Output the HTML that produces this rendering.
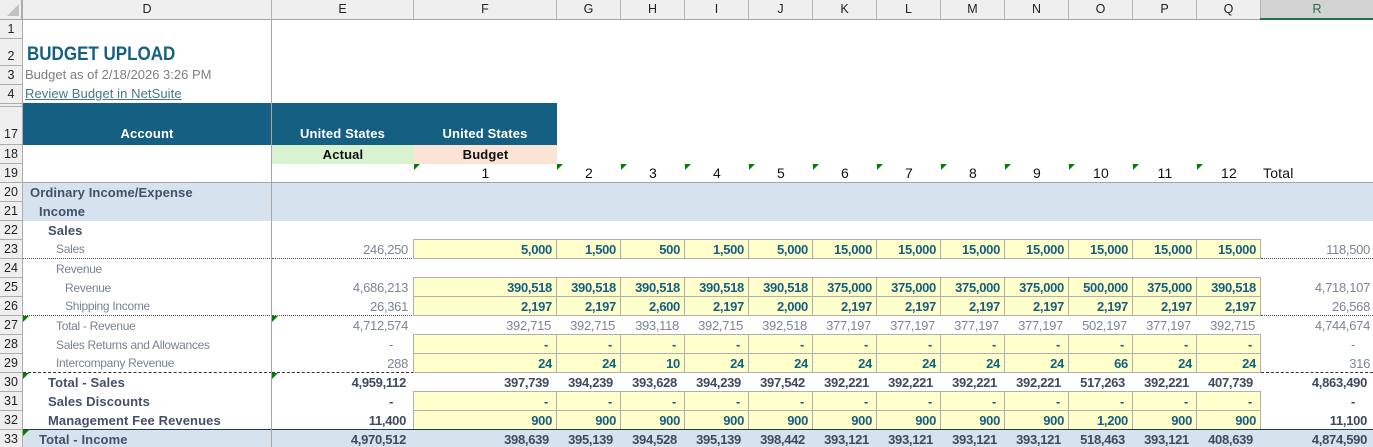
<!DOCTYPE html>
<html><head><meta charset="utf-8"><style>
html,body{margin:0;padding:0;background:#fff;width:1373px;height:447px;overflow:hidden}
body{position:relative;font-family:"Liberation Sans",sans-serif;font-size:13px}
.a{position:absolute;white-space:nowrap}
.ch{position:absolute;top:0;height:19px;background:#efefef;border-right:1px solid #b4b4b4;box-sizing:border-box;text-align:center;font:12.5px/19px "Liberation Sans",sans-serif;color:#222}
.rh{position:absolute;left:0;width:22px;background:#efefef;border-bottom:1px solid #adadad;box-sizing:border-box;text-align:center;font:12.5px/18px "Liberation Sans",sans-serif;color:#222;display:flex;align-items:flex-end;justify-content:center}
table{position:absolute;left:0;top:145px;border-collapse:separate;border-spacing:0;table-layout:fixed;width:1373px}
tr{height:19px}
td{height:19px;padding:0;box-sizing:border-box;white-space:nowrap;overflow:visible;text-align:right;vertical-align:middle;line-height:17px;font-size:13px;letter-spacing:-.3px}
td.h{background:#efefef;border-bottom:1px solid #adadad;border-right:1px solid #adadad;text-align:center;font:12.5px/18px "Liberation Sans",sans-serif;color:#222;letter-spacing:0}
td.l{text-align:left;color:#7a8394;font-size:12px;letter-spacing:-.3px;padding-top:0;line-height:18px}
tr.dot td.l,tr.dash td.l{padding-top:1px;line-height:17px}
td.m{text-align:left;color:#44506a;font-weight:bold;letter-spacing:.1px}
td.g{color:#7d8594;padding-right:6px}
td.b{color:#3f4a5f;font-weight:bold;padding-right:8px}
td.y{color:#156082;font-weight:bold;padding-right:5px;background:#ffffcc;position:relative}
td.y:after{content:"";position:absolute;left:-1px;top:-1px;right:0;bottom:0;border:1px solid #b0b0b0}
td.z{color:#156082;font-weight:bold;padding-right:9px;background:#ffffcc;position:relative}
td.z:after{content:"";position:absolute;left:-1px;top:-1px;right:0;bottom:0;border:1px solid #b0b0b0}
td.c{text-align:center;font:14px/17px "Liberation Sans",sans-serif;color:#111;letter-spacing:.2px;vertical-align:bottom}
td.hd{text-align:center;font-weight:bold;color:#111;letter-spacing:.15px}
tr.blue td:not(.h){background:#d6e3ee}
tr.dot td.u{border-bottom:1px dotted #555}
tr.dash td.u{border-bottom:1px dashed #333}
.i1{padding-left:7px}.i2{padding-left:16px}.i3{padding-left:25px}.i4{padding-left:33px}.i5{padding-left:42px}
.t{position:absolute;width:0;height:0;border-top:6px solid #008000;border-right:6px solid transparent;z-index:5}
.w{color:#fff;font-weight:bold;text-align:center;letter-spacing:.15px;font-size:13px}
</style></head><body>
<div class="ch" style="left:0;width:23px;border-right:2px solid #adadad"></div>
<svg class="a" style="left:0;top:0" width="22" height="19"><polygon points="19,4 19,16 7,16" fill="#c2c2c2"/></svg>
<div class="ch" style="left:23px;width:249px">D</div>
<div class="ch" style="left:272px;width:142px">E</div>
<div class="ch" style="left:414px;width:143px">F</div>
<div class="ch" style="left:557px;width:64px">G</div>
<div class="ch" style="left:621px;width:64px">H</div>
<div class="ch" style="left:685px;width:64px">I</div>
<div class="ch" style="left:749px;width:64px">J</div>
<div class="ch" style="left:813px;width:64px">K</div>
<div class="ch" style="left:877px;width:64px">L</div>
<div class="ch" style="left:941px;width:64px">M</div>
<div class="ch" style="left:1005px;width:64px">N</div>
<div class="ch" style="left:1069px;width:64px">O</div>
<div class="ch" style="left:1133px;width:64px">P</div>
<div class="ch" style="left:1197px;width:64px">Q</div>
<div class="ch" style="left:1261px;width:112px;background:#d2d2d2;color:#2b6b4a;border:0">R</div>
<div class="a" style="left:0;top:19px;width:1261px;height:1px;background:#a6a6a6"></div>
<div class="a" style="left:1260px;top:18px;width:113px;height:2px;background:#217346"></div>

<div class="rh" style="top:20px;height:19px">1</div>
<div class="rh" style="top:39px;height:27px">2</div>
<div class="rh" style="top:66px;height:19px">3</div>
<div class="rh" style="top:85px;height:19px">4</div>
<div class="rh" style="top:104px;height:3px"></div>
<div class="rh" style="top:107px;height:38px;padding-bottom:1px">17</div>
<div class="a" style="left:22px;top:20px;width:1px;height:427px;background:#adadad"></div>

<div class="a" style="left:27px;top:44px;font:bold 19px/22px 'Liberation Sans',sans-serif;color:#156082;transform:scaleX(.895);transform-origin:left center">BUDGET UPLOAD</div>
<div class="a" style="left:25px;top:66px;font-size:13px;line-height:18px;color:#7f7f7f">Budget as of 2/18/2026 3:26 PM</div>
<div class="a" style="left:25px;top:85px;font-size:13px;line-height:18px;color:#467886;letter-spacing:.08px;text-decoration:underline">Review Budget in NetSuite</div>

<div class="a" style="left:23px;top:103px;width:534px;height:42px;background:#156082"></div>
<div class="a w" style="left:23px;top:125px;width:248px;line-height:18px">Account</div>
<div class="a w" style="left:272px;top:125px;width:141px;line-height:18px">United States</div>
<div class="a w" style="left:414px;top:125px;width:142px;line-height:18px">United States</div>

<table>
<colgroup><col style="width:23px"><col style="width:249px"><col style="width:142px"><col style="width:143px"><col span="11" style="width:64px"><col style="width:112px"></colgroup>
<tr><td class="h">18</td><td></td><td class="hd" style="background:#d9f2d0">Actual</td><td class="hd" style="background:#fbe3d6">Budget</td><td colspan="12"></td></tr>
<tr><td class="h">19</td><td style="border-bottom:1px solid #a6a6a6"></td><td style="border-bottom:1px solid #a6a6a6"></td><td class="c" style="border-bottom:1px solid #a6a6a6">1</td><td class="c" style="border-bottom:1px solid #a6a6a6">2</td><td class="c" style="border-bottom:1px solid #a6a6a6">3</td><td class="c" style="border-bottom:1px solid #a6a6a6">4</td><td class="c" style="border-bottom:1px solid #a6a6a6">5</td><td class="c" style="border-bottom:1px solid #a6a6a6">6</td><td class="c" style="border-bottom:1px solid #a6a6a6">7</td><td class="c" style="border-bottom:1px solid #a6a6a6">8</td><td class="c" style="border-bottom:1px solid #a6a6a6">9</td><td class="c" style="border-bottom:1px solid #a6a6a6">10</td><td class="c" style="border-bottom:1px solid #a6a6a6">11</td><td class="c" style="border-bottom:1px solid #a6a6a6">12</td><td class="c" style="border-bottom:1px solid #a6a6a6;text-align:left;padding-left:2px">Total</td></tr>
<tr class="blue"><td class="h">20</td><td class="m i1">Ordinary Income/Expense</td><td colspan="14"></td></tr>
<tr class="blue"><td class="h">21</td><td class="m i2">Income</td><td colspan="14"></td></tr>
<tr><td class="h">22</td><td class="m i3">Sales</td><td colspan="14"></td></tr>
<tr class="dot"><td class="h">23</td><td class="l i4 u">Sales</td><td class="g u">246,250</td><td class="y">5,000</td><td class="y">1,500</td><td class="y">500</td><td class="y">1,500</td><td class="y">5,000</td><td class="y">15,000</td><td class="y">15,000</td><td class="y">15,000</td><td class="y">15,000</td><td class="y">15,000</td><td class="y">15,000</td><td class="y">15,000</td><td class="g u" style="padding-right:3px">118,500</td></tr>
<tr><td class="h">24</td><td class="l i4">Revenue</td><td colspan="14"></td></tr>
<tr><td class="h">25</td><td class="l i5">Revenue</td><td class="g">4,686,213</td><td class="y">390,518</td><td class="y">390,518</td><td class="y">390,518</td><td class="y">390,518</td><td class="y">390,518</td><td class="y">375,000</td><td class="y">375,000</td><td class="y">375,000</td><td class="y">375,000</td><td class="y">500,000</td><td class="y">375,000</td><td class="y">390,518</td><td class="g" style="padding-right:3px">4,718,107</td></tr>
<tr class="dot"><td class="h">26</td><td class="l i5 u">Shipping Income</td><td class="g u">26,361</td><td class="y">2,197</td><td class="y">2,197</td><td class="y">2,600</td><td class="y">2,197</td><td class="y">2,000</td><td class="y">2,197</td><td class="y">2,197</td><td class="y">2,197</td><td class="y">2,197</td><td class="y">2,197</td><td class="y">2,197</td><td class="y">2,197</td><td class="g u" style="padding-right:3px">26,568</td></tr>
<tr><td class="h">27</td><td class="l i4">Total - Revenue</td><td class="g">4,712,574</td><td class="g">392,715</td><td class="g">392,715</td><td class="g">393,118</td><td class="g">392,715</td><td class="g">392,518</td><td class="g">377,197</td><td class="g">377,197</td><td class="g">377,197</td><td class="g">377,197</td><td class="g">502,197</td><td class="g">377,197</td><td class="g">392,715</td><td class="g" style="padding-right:3px">4,744,674</td></tr>
<tr><td class="h">28</td><td class="l i4">Sales Returns and Allowances</td><td class="g" style="padding-right:21px">-</td><td class="z">-</td><td class="z">-</td><td class="z">-</td><td class="z">-</td><td class="z">-</td><td class="z">-</td><td class="z">-</td><td class="z">-</td><td class="z">-</td><td class="z">-</td><td class="z">-</td><td class="z">-</td><td class="g" style="padding-right:18px">-</td></tr>
<tr class="dash"><td class="h">29</td><td class="l i4 u">Intercompany Revenue</td><td class="g u">288</td><td class="y">24</td><td class="y">24</td><td class="y">10</td><td class="y">24</td><td class="y">24</td><td class="y">24</td><td class="y">24</td><td class="y">24</td><td class="y">24</td><td class="y">66</td><td class="y">24</td><td class="y">24</td><td class="g u" style="padding-right:3px">316</td></tr>
<tr><td class="h">30</td><td class="m i3">Total - Sales</td><td class="b">4,959,112</td><td class="b">397,739</td><td class="b">394,239</td><td class="b">393,628</td><td class="b">394,239</td><td class="b">397,542</td><td class="b">392,221</td><td class="b">392,221</td><td class="b">392,221</td><td class="b">392,221</td><td class="b">517,263</td><td class="b">392,221</td><td class="b">407,739</td><td class="b" style="padding-right:6px">4,863,490</td></tr>
<tr><td class="h">31</td><td class="m i3">Sales Discounts</td><td class="b" style="padding-right:21px">-</td><td class="z">-</td><td class="z">-</td><td class="z">-</td><td class="z">-</td><td class="z">-</td><td class="z">-</td><td class="z">-</td><td class="z">-</td><td class="z">-</td><td class="z">-</td><td class="z">-</td><td class="z">-</td><td class="b" style="padding-right:18px">-</td></tr>
<tr><td class="h">32</td><td class="m i3">Management Fee Revenues</td><td class="b">11,400</td><td class="y">900</td><td class="y">900</td><td class="y">900</td><td class="y">900</td><td class="y">900</td><td class="y">900</td><td class="y">900</td><td class="y">900</td><td class="y">900</td><td class="y">1,200</td><td class="y">900</td><td class="y">900</td><td class="b" style="padding-right:6px">11,100</td></tr>
<tr class="blue"><td class="h">33</td><td class="m i2">Total - Income</td><td class="b">4,970,512</td><td class="b">398,639</td><td class="b">395,139</td><td class="b">394,528</td><td class="b">395,139</td><td class="b">398,442</td><td class="b">393,121</td><td class="b">393,121</td><td class="b">393,121</td><td class="b">393,121</td><td class="b">518,463</td><td class="b">393,121</td><td class="b">408,639</td><td class="b" style="padding-right:6px">4,874,590</td></tr>
</table>

<div class="a" style="left:23px;top:429px;width:1350px;height:1px;background:#1f3a52;z-index:4"></div>
<div class="a" style="left:271px;top:20px;width:1px;height:427px;background:#a6a6a6;z-index:4"></div>

<div class="t" style="left:414px;top:164px"></div><div class="t" style="left:557px;top:164px"></div><div class="t" style="left:621px;top:164px"></div><div class="t" style="left:685px;top:164px"></div><div class="t" style="left:749px;top:164px"></div><div class="t" style="left:813px;top:164px"></div><div class="t" style="left:877px;top:164px"></div><div class="t" style="left:941px;top:164px"></div><div class="t" style="left:1005px;top:164px"></div><div class="t" style="left:1069px;top:164px"></div><div class="t" style="left:1133px;top:164px"></div><div class="t" style="left:1197px;top:164px"></div>
<div class="t" style="left:23px;top:316px"></div><div class="t" style="left:272px;top:316px"></div>
<div class="t" style="left:23px;top:373px"></div><div class="t" style="left:272px;top:373px"></div>
<div class="t" style="left:23px;top:430px"></div>
</body></html>
